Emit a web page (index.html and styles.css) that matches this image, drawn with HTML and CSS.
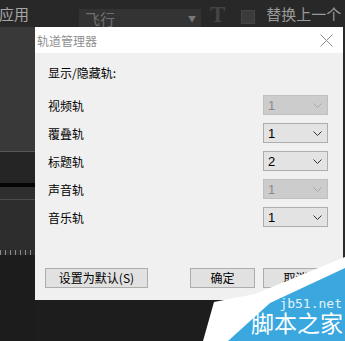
FILE: index.html
```html
<!DOCTYPE html>
<html lang="zh-CN">
<head>
  <meta charset="UTF-8">
  <title>轨道管理器</title>
  <link rel="stylesheet" href="styles.css">
</head>
<body>
  <div class="toolbar">
    <span class="apply">应用</span>
    <div class="dropdown"><span>飞行</span><span class="arrow">▼</span></div>
    <span class="tool-t">T</span>
    <span class="check"></span>
    <span class="replace">替换上一个</span>
  </div>

  <div class="main">
    <div class="side">
      <div class="band b1"></div>
      <div class="band b2"></div>
      <div class="band b3"></div>
      <div class="band b4"></div>
      <div class="band b5"></div>
      <div class="band ruler"></div>
      <div class="band b6"></div>
    </div>

    <div class="center">
      <div class="dialog">
        <div class="titlebar">
          <span class="title">轨道管理器</span>
          <svg class="close" width="13" height="13" viewBox="0 0 13 13">
            <path d="M0.5 0.5 L12.5 12.5 M12.5 0.5 L0.5 12.5" stroke="#8c8c8c" stroke-width="1" fill="none"/>
          </svg>
        </div>
        <div class="body">
          <div class="heading">显示/隐藏轨:</div>
          <div class="rows">
            <div class="row"><span>视频轨</span><div class="combo disabled"><span>1</span><svg width="9" height="5" viewBox="0 0 9 5"><path d="M0.5 0.5 L4.5 4.5 L8.5 0.5" stroke="currentColor" fill="none"/></svg></div></div>
            <div class="row"><span>覆叠轨</span><div class="combo"><span>1</span><svg width="9" height="5" viewBox="0 0 9 5"><path d="M0.5 0.5 L4.5 4.5 L8.5 0.5" stroke="currentColor" fill="none"/></svg></div></div>
            <div class="row"><span>标题轨</span><div class="combo"><span>2</span><svg width="9" height="5" viewBox="0 0 9 5"><path d="M0.5 0.5 L4.5 4.5 L8.5 0.5" stroke="currentColor" fill="none"/></svg></div></div>
            <div class="row"><span>声音轨</span><div class="combo disabled"><span>1</span><svg width="9" height="5" viewBox="0 0 9 5"><path d="M0.5 0.5 L4.5 4.5 L8.5 0.5" stroke="currentColor" fill="none"/></svg></div></div>
            <div class="row"><span>音乐轨</span><div class="combo"><span>1</span><svg width="9" height="5" viewBox="0 0 9 5"><path d="M0.5 0.5 L4.5 4.5 L8.5 0.5" stroke="currentColor" fill="none"/></svg></div></div>
          </div>
          <div class="buttons">
            <button class="btn wide">设置为默认(S)</button>
            <span class="spacer"></span>
            <button class="btn">确定</button>
            <button class="btn">取消</button>
          </div>
        </div>
      </div>
    </div>

    <div class="edge"></div>
  </div>

  <div class="watermark">
    <svg width="145" height="91" viewBox="0 0 145 91">
      <polygon points="145,7 55,44 14,52 3,91 145,91" fill="#ffffff"/>
      <polygon points="145,18 70,53 28,91 145,91" fill="#3aa8df"/>
    </svg>
    <span class="wm-site">jb51.net</span>
    <span class="wm-name">脚本之家</span>
  </div>
</body>
</html>
```

FILE: styles.css
```css
body {
  margin: 0;
  width: 345px;
  height: 341px;
  overflow: hidden;
  background: #1d1d1d;
  font-family: "Noto Sans CJK SC", sans-serif;
  position: relative;
}

.toolbar {
  display: flex;
  align-items: flex-start;
  height: 27px;
  background: #282828;
  overflow: hidden;
  white-space: nowrap;
}

.apply {
  width: 80px;
  margin-top: 4px;
  margin-left: -1px;
  font-size: 15px;
  line-height: 20px;
  color: #a6a6a6;
}

.dropdown {
  display: flex;
  justify-content: space-between;
  align-items: center;
  box-sizing: border-box;
  width: 122px;
  height: 18px;
  margin-top: 9px;
  padding: 0 5px 0 6px;
  background: #333333;
  color: #6f6f6f;
  font-size: 15px;
}

.arrow {
  font-size: 8px;
  color: #777;
}

.tool-t {
  margin-left: 9px;
  margin-top: 3px;
  font-family: "Liberation Serif", serif;
  font-weight: bold;
  font-size: 23px;
  line-height: 24px;
  color: #444444;
}

.check {
  box-sizing: border-box;
  width: 14px;
  height: 14px;
  margin-left: 16px;
  margin-top: 10px;
  background: #3b3b3b;
  border: 1px solid #454545;
}

.replace {
  margin-left: 11px;
  margin-top: 4px;
  font-size: 15px;
  line-height: 20px;
  color: #9a9a9a;
}

.main {
  display: flex;
  height: 314px;
}

.side {
  width: 35px;
  display: flex;
  flex-direction: column;
}

.band { flex: none; }
.b1 { height: 124px; background: #393939; border-bottom: 1px solid #585858; }
.b2 { height: 31px; background: #252525; }
.b3 { height: 4px; background: #050505; }
.b4 { height: 12px; background: #2e2e2e; border-bottom: 1px solid #4b4b4b; }
.b5 { height: 47px; background: #2d2d2d; }
.ruler {
  height: 8px;
  background: #2d2d2d repeating-linear-gradient(90deg, #8a8a8a 0 1px, transparent 1px 5px);
  background-size: 100% 5px;
  background-repeat: no-repeat;
  background-position: 0 3px;
}
.b6 { flex: 1; background: #1c1c1c; }

.center {
  width: 308px;
}

.edge {
  flex: 1;
  background: #2a2a2a;
}

.dialog {
  height: 273px;
  display: flex;
  flex-direction: column;
  background: #f0f0f0;
}

.titlebar {
  display: flex;
  justify-content: space-between;
  align-items: center;
  height: 26px;
  padding: 0 10px 0 2px;
  background: #ffffff;
}

.title {
  font-size: 12px;
  color: #8f8f8f;
}

.body {
  flex: 1;
  display: flex;
  flex-direction: column;
  padding: 10px 15px 12px 13px;
  font-size: 12px;
  color: #000;
}

.heading {
  line-height: 20px;
}

.rows {
  display: flex;
  flex-direction: column;
  gap: 8px;
  margin-top: 12px;
}

.row {
  display: flex;
  justify-content: space-between;
  align-items: center;
  height: 20px;
}

.combo {
  display: flex;
  justify-content: space-between;
  align-items: center;
  box-sizing: border-box;
  width: 65px;
  height: 20px;
  padding: 0 5px 0 4px;
  background: #e3e3e3;
  border: 1px solid #adadad;
  color: #000;
  font-family: "Liberation Sans", sans-serif;
  font-size: 13px;
}

.combo svg { color: #333; }

.combo.disabled {
  background: #cccccc;
  border-color: #bfbfbf;
  color: #8a8a8a;
}

.combo.disabled svg { color: #a8a8a8; }

.buttons {
  display: flex;
  gap: 8px;
  margin-top: auto;
  margin-left: -3px;
}

.spacer { flex: 1; }

.btn {
  box-sizing: border-box;
  width: 65px;
  height: 20px;
  padding: 0;
  background: #e1e1e1;
  border: 1px solid #adadad;
  font-family: "Noto Sans CJK SC", sans-serif;
  font-size: 12px;
  line-height: 18px;
  color: #000;
}

.btn.wide { width: 103px; }

.watermark {
  position: absolute;
  left: 200px;
  top: 250px;
  width: 145px;
  height: 91px;
}

.watermark svg {
  display: block;
}

.wm-site {
  position: absolute;
  right: 3px;
  top: 47px;
  font-family: "DejaVu Sans Mono", monospace;
  font-size: 13px;
  line-height: 13px;
  color: #e4f3fb;
}

.wm-name {
  position: absolute;
  right: 2px;
  top: 60px;
  font-size: 23px;
  line-height: 25px;
  color: #ffffff;
}
```
